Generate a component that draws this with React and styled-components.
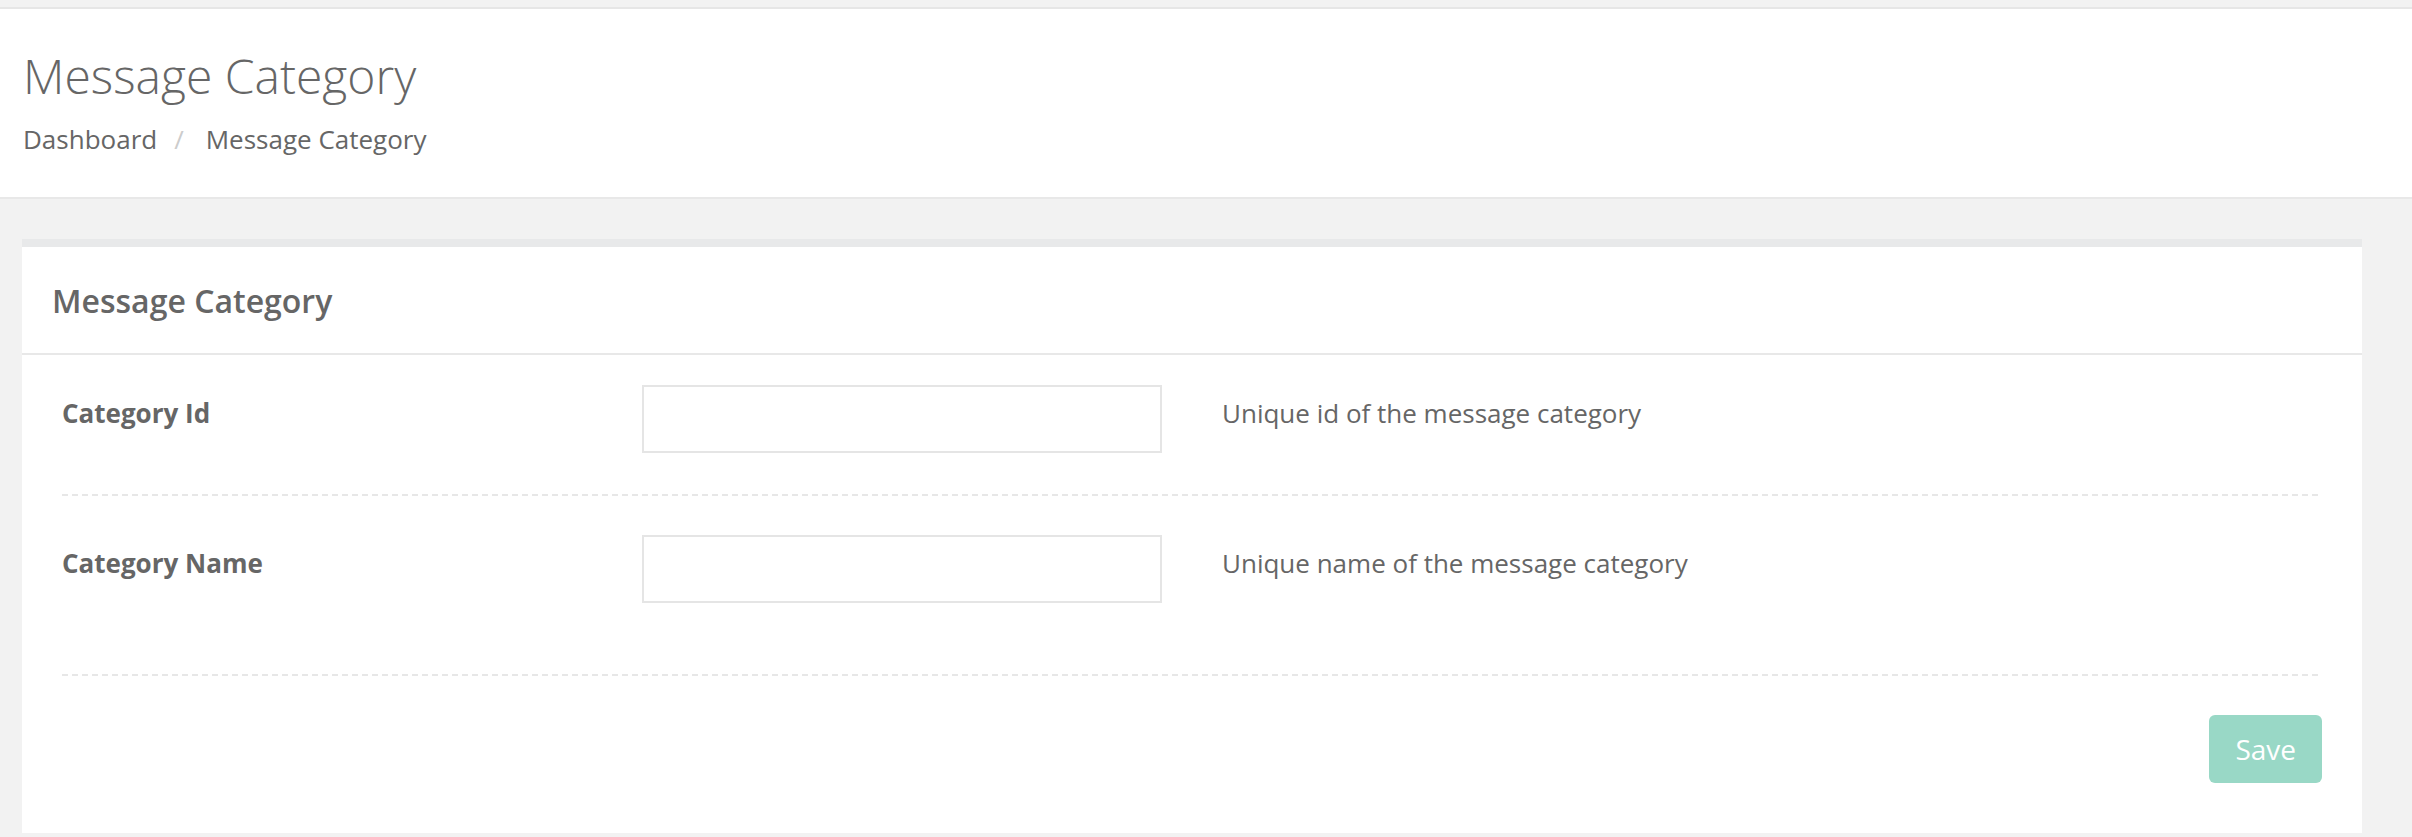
import React from 'react';
import styled, { createGlobalStyle } from 'styled-components';

const GlobalStyle = createGlobalStyle`
  html, body {
    margin: 0;
    padding: 0;
    background: #f2f2f2;
  }
  body {
    font-family: "Open Sans", "Liberation Sans", sans-serif;
    color: #666;
  }
  * {
    box-sizing: border-box;
  }
`;

const dashedLine = `repeating-linear-gradient(to right, #e7e7e7 0 6px, transparent 6px 10px)`;

const Page = styled.div`
  padding-top: 7px;
  min-height: 100vh;
`;

const PageHeader = styled.header`
  background: #fff;
  border-top: 2px solid #e6e6e6;
  border-bottom: 2px solid #e8e8e8;
  padding: 37px 23px 38px;
`;

const PageTitle = styled.h1`
  margin: 0;
  font-size: 48px;
  font-weight: 300;
  line-height: 60px;
  color: #666;
`;

const Breadcrumb = styled.ol`
  list-style: none;
  margin: 13px 0 0;
  padding: 0;
  display: flex;
  align-items: center;
  font-size: 26px;
  line-height: 40px;
  color: #666;
`;

const Crumb = styled.li`
  display: flex;
  align-items: center;
`;

const CrumbSeparator = styled.span`
  color: #ccc;
  padding: 0 22px 0 17px;
`;

const Content = styled.main`
  padding: 40px 50px 0 22px;
`;

const Card = styled.section`
  background: #fff;
  border-top: 8px solid #e8e9ea;
`;

const CardHeader = styled.div`
  padding: 32px 30px 30px;
  border-bottom: 2px solid #e8e8e8;
`;

const CardTitle = styled.h2`
  margin: 0;
  font-size: 32px;
  font-weight: 600;
  line-height: 44px;
  color: #666;
`;

const CardBody = styled.div`
  padding: 30px 40px 50px;
`;

const FormBody = styled.div`
  padding-bottom: 71px;
`;

const FormRow = styled.div`
  display: grid;
  grid-template-columns: 520px 520px 1fr;
  column-gap: 60px;
  align-items: start;

  &:not(:last-child) {
    padding-bottom: 43px;
    margin-bottom: 39px;
    background: ${dashedLine} left bottom / 100% 2px no-repeat;
  }
`;

const Label = styled.label`
  padding-top: 8px;
  font-size: 26px;
  font-weight: 700;
  line-height: 40px;
  color: #666;
`;

const TextInput = styled.input`
  display: block;
  width: 100%;
  height: 68px;
  border: 2px solid #e5e5e5;
  border-radius: 0;
  padding: 0 20px;
  font-family: inherit;
  font-size: 26px;
  color: #555;
  background: #fff;
  outline: none;
`;

const Hint = styled.span`
  padding-top: 8px;
  font-size: 26px;
  line-height: 40px;
  color: #666;
`;

const FormActions = styled.div`
  display: flex;
  justify-content: flex-end;
  padding-top: 41px;
  background: ${dashedLine} left top / 100% 2px no-repeat;
`;

const SaveButton = styled.button`
  height: 68px;
  padding: 0 26px;
  border: none;
  border-radius: 6px;
  background: #99d8c6;
  color: #fff;
  font-family: inherit;
  font-size: 28px;
  line-height: 40px;
`;

const fields = [
  { id: 'categoryId', label: 'Category Id', hint: 'Unique id of the message category' },
  { id: 'categoryName', label: 'Category Name', hint: 'Unique name of the message category' },
];

const App = () => (
  <Page>
    <GlobalStyle />
    <PageHeader>
      <PageTitle>Message Category</PageTitle>
      <Breadcrumb>
        <Crumb>Dashboard</Crumb>
        <Crumb>
          <CrumbSeparator>/</CrumbSeparator>
          Message Category
        </Crumb>
      </Breadcrumb>
    </PageHeader>

    <Content>
      <Card>
        <CardHeader>
          <CardTitle>Message Category</CardTitle>
        </CardHeader>
        <CardBody>
          <FormBody>
            {fields.map((field) => (
              <FormRow key={field.id}>
                <Label htmlFor={field.id}>{field.label}</Label>
                <TextInput id={field.id} type="text" />
                <Hint>{field.hint}</Hint>
              </FormRow>
            ))}
          </FormBody>
          <FormActions>
            <SaveButton type="button">Save</SaveButton>
          </FormActions>
        </CardBody>
      </Card>
    </Content>
  </Page>
);

export default App;
